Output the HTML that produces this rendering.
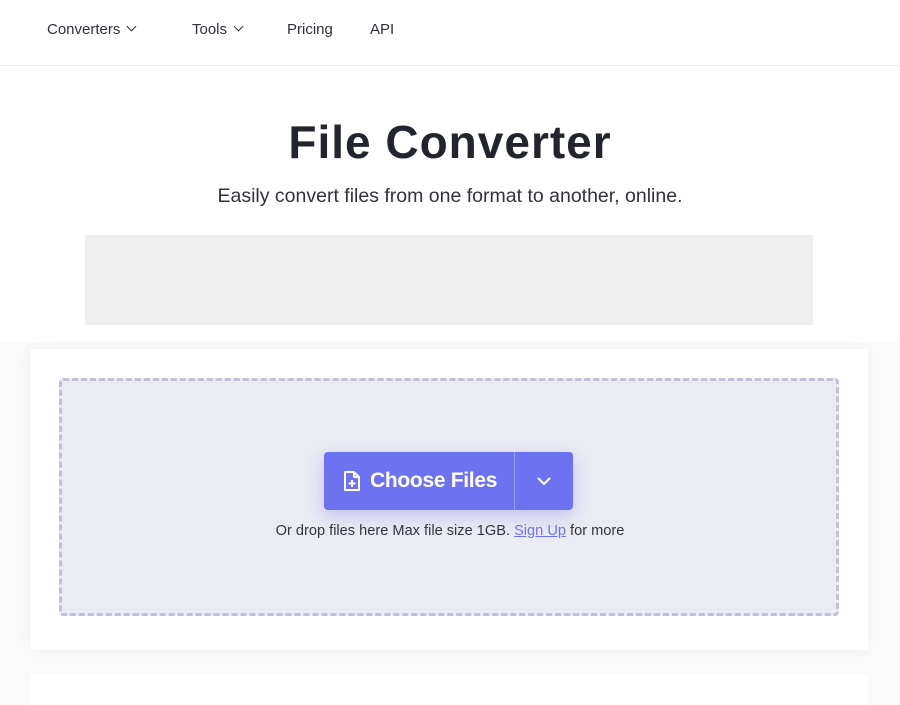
<!DOCTYPE html>
<html><head><style>
body{margin:0;width:900px;height:691px;overflow:hidden;background:#fafafb;font-family:"Liberation Sans",sans-serif;color:#2b2e38;position:relative}
.nav{position:absolute;left:0;top:0;width:900px;height:65px;background:#fff;border-bottom:1px solid #eeeef0}
.nav span{position:absolute;top:21px;font-size:15px;color:#2f323c}
.chev{display:inline-block;width:6px;height:6px;border-right:1.5px solid #333;border-bottom:1.5px solid #333;transform:rotate(45deg);margin-left:8px;position:relative;top:-4px}
.hero{position:absolute;left:0;top:66px;width:900px;height:276px;background:#fff}
h1{position:absolute;top:115px;left:0;width:900px;text-align:center;margin:0;font-size:46px;font-weight:bold;color:#22252e;letter-spacing:1px}
.sub{position:absolute;top:185px;left:0;width:900px;text-align:center;font-size:19.5px;color:#30333c}
.ad{position:absolute;left:85px;top:235px;width:728px;height:90px;background:#f0f0f0}
.card{position:absolute;left:30px;top:349px;width:838px;height:301px;background:#fff;box-shadow:0 0 20px rgba(0,0,0,.04)}
.drop{position:absolute;left:59px;top:378px;width:774px;height:232px;background:#ebebf3;border:3px dashed #c2c0dc;border-radius:4px}
.btn{position:absolute;left:324px;top:452px;width:249px;height:58px;background:#6d73f0;border-radius:4px;box-shadow:0 6px 18px rgba(109,115,240,.35);color:#fff}
.btn .t{position:absolute;left:46px;top:17px;font-size:21px;font-weight:bold;letter-spacing:-0.3px}
.btn .d{position:absolute;left:190px;top:0;width:1px;height:58px;background:#9a9ef5}
.note{position:absolute;top:523px;left:0;width:900px;text-align:center;font-size:14.6px;color:#33363f}
.note a{color:#6d73f0;text-decoration:underline}
.card2{position:absolute;left:30px;top:675px;width:838px;height:30px;background:#fff}
</style></head><body>
<div class="nav">
<span style="left:47px">Converters<i class="chev"></i></span>
<span style="left:192px">Tools<i class="chev"></i></span>
<span style="left:287px">Pricing</span>
<span style="left:370px">API</span>
</div>
<div class="hero"></div>
<h1>File Converter</h1>
<div class="sub">Easily convert files from one format to another, online.</div>
<div class="ad"></div>
<div class="card"></div>
<div class="drop"></div>
<div class="btn">
<svg style="position:absolute;left:19px;top:18px" width="18" height="22" viewBox="0 0 18 22" fill="none" stroke="#fff" stroke-width="2" stroke-linejoin="round"><path d="M2 2h9l5 5v13H2z"/><path d="M11 2v5h5"/><path d="M9 10v7M5.5 13.5h7"/></svg>
<span class="t">Choose Files</span>
<span class="d"></span>
<svg style="position:absolute;left:213px;top:25px" width="14" height="9" viewBox="0 0 14 9" fill="none" stroke="#fff" stroke-width="2"><path d="M1 1l6 6 6-6"/></svg>
</div>
<div class="note">Or drop files here Max file size 1GB. <a>Sign Up</a> for more</div>
<div class="card2"></div>
</body></html>
